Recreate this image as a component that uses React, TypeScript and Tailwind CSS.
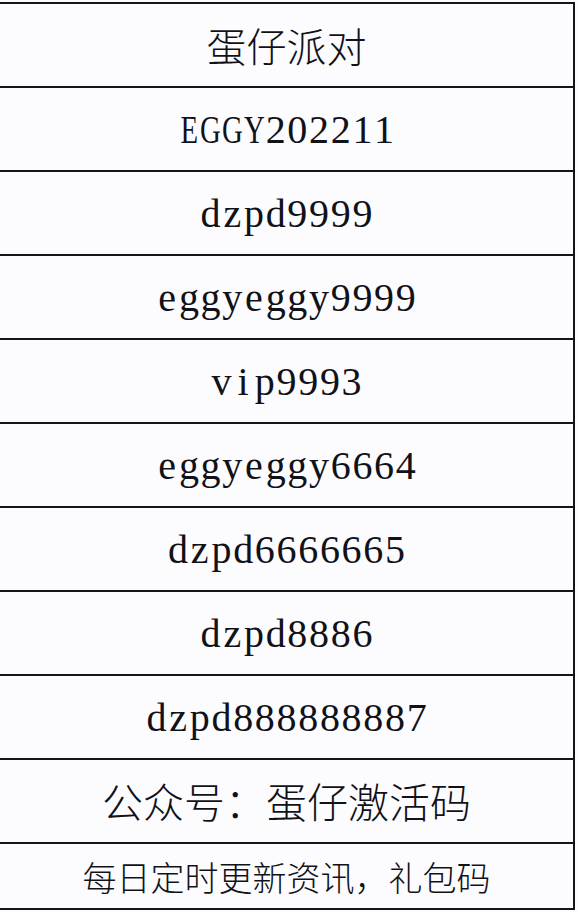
const codes = [
  "EGGY202211",
  "dzpd9999",
  "eggyeggy9999",
  "vip9993",
  "eggyeggy6664",
  "dzpd6666665",
  "dzpd8886",
  "dzpd888888887",
];

// Each code is set as fixed-width character cells, like a half-width song font
function Code({ text }: { text: string }) {
  return (
    <span className="flex font-['Liberation_Serif',serif] text-[40px] leading-none">
      {text.split("").map((ch, i) => (
        <span key={i} className="flex w-[21.7px] justify-center">
          <span className={ch >= "A" && ch <= "Z" ? "inline-block scale-x-[0.72]" : "inline-block"}>
            {ch}
          </span>
        </span>
      ))}
    </span>
  );
}

export default function App() {
  return (
    <div className="min-h-[912px] w-[578px] bg-[#fcfcff] pt-[2px] text-[#111118]">
      <div className="w-[575px] border-r-2 border-b-2 border-[#14141c] font-['Noto_Sans_CJK_SC','Noto_Sans',sans-serif]">
        <div className="flex h-[84px] items-center justify-center border-t-2 border-[#14141c] text-[40px] font-light">
          蛋仔派对
        </div>

        {codes.map((code) => (
          <div key={code} className="flex h-[84px] items-center justify-center border-t-2 border-[#14141c] pt-[2px]">
            <Code text={code} />
          </div>
        ))}

        <div className="flex h-[84px] items-center justify-center border-t-2 border-[#14141c] text-[41px] font-light">
          公众号：蛋仔激活码
        </div>
        <div className="flex h-[66px] items-center justify-center border-t-2 border-[#14141c] text-[34px] font-light">
          每日定时更新资讯，礼包码
        </div>
      </div>
    </div>
  );
}
